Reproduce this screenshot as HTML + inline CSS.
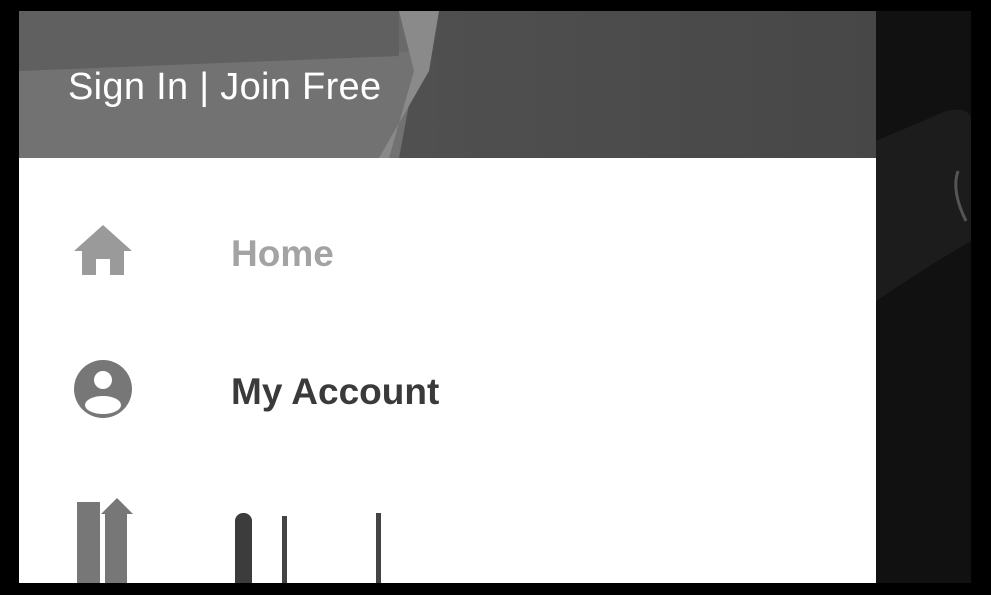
<!DOCTYPE html>
<html><head><style>
body{margin:0;width:991px;height:595px;background:#000;position:relative;overflow:hidden;font-family:"Liberation Sans",sans-serif}
.strip{position:absolute;left:876px;top:11px;width:95px;height:572px;background:#111}
.panel{position:absolute;left:19px;top:11px;width:857px;height:572px;background:#fff;overflow:hidden}
.hdr{position:absolute;left:0;top:0;width:857px;height:147px;background:linear-gradient(90deg,#5e5e5e,#4f4f4f 50%,#474747)}
.t{position:absolute;white-space:nowrap}
</style></head><body>
<div class="strip">
<svg width="95" height="572" style="position:absolute;left:0;top:0"><path d="M0 130 L70 100 Q95 95 95 110 L95 230 Q60 250 0 290Z" fill="#1c1c1c"/><path d="M82 160 Q75 180 90 210" stroke="#555" stroke-width="3" fill="none"/></svg>
</div>
<div class="panel">
<div class="hdr">
<svg width="857" height="147" style="position:absolute;left:0;top:0">
<polygon points="0,0 400,0 380,147 0,147" fill="#6a6a6a"/>
<polygon points="0,60 400,40 380,147 0,147" fill="#727272"/>
<polygon points="380,0 420,0 410,60 360,147 370,147 395,60" fill="#8a8a8a"/>
<polygon points="0,0 380,0 380,45 0,60" fill="#606060"/>
</svg>
<div class="t" style="left:49px;top:55px;font-size:38px;letter-spacing:0.3px;color:#fff">Sign In | Join Free</div>
</div>
<svg style="position:absolute;left:55px;top:214px" width="58" height="50" viewBox="0 0 58 50"><polygon points="29,0 58,26 50,26 50,50 36,50 36,34 22,34 22,50 8,50 8,26 0,26" fill="#9a9a9a"/></svg>
<div class="t" style="left:212px;top:222px;font-size:37px;font-weight:bold;color:#a3a3a3">Home</div>
<svg style="position:absolute;left:55px;top:349px" width="58" height="58" viewBox="0 0 58 58"><circle cx="29" cy="29" r="29" fill="#777"/><circle cx="29" cy="20" r="9" fill="#fff"/><ellipse cx="29" cy="45" rx="18" ry="9" fill="#fff"/></svg>
<div class="t" style="left:212px;top:360px;font-size:37px;font-weight:bold;color:#3a3a3a">My Account</div>
<div style="position:absolute;left:58px;top:491px;width:23px;height:90px;background:#777"></div>
<svg style="position:absolute;left:82px;top:487px" width="32" height="90"><polygon points="16,0 32,16 26,16 26,90 4,90 4,16 0,16" fill="#777"/></svg>
<div style="position:absolute;left:216px;top:502px;width:17px;height:80px;background:#3c3c3c;border-radius:8px 8px 0 0"></div>
<div style="position:absolute;left:263px;top:505px;width:5px;height:70px;background:#444"></div>
<div style="position:absolute;left:357px;top:502px;width:5px;height:75px;background:#444"></div>
</div>
</body></html>
